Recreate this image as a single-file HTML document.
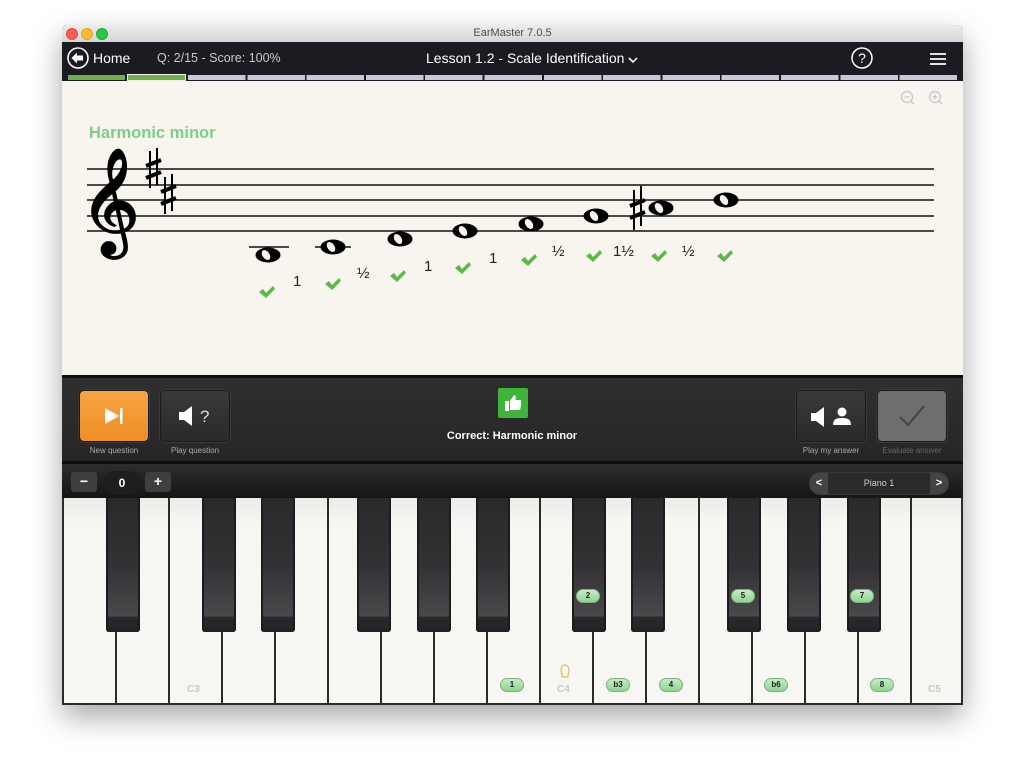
<!DOCTYPE html>
<html><head><meta charset="utf-8"><style>
*{margin:0;padding:0;box-sizing:border-box}
body{width:1024px;height:768px;background:#fff;position:relative;overflow:hidden;font-family:"Liberation Sans","DejaVu Sans",sans-serif}
.a{position:absolute}
#win{left:62px;top:25px;width:901px;height:680px;background:#1c1c1c;box-shadow:0 12px 30px rgba(0,0,0,.35);border-radius:5px 5px 0 0;overflow:hidden}
.tl{width:12px;height:12px;border-radius:50%;top:3px}
.btn{border-radius:5px;border:1px solid #1a1a1a;box-shadow:0 0 0 1px #3a3a3a}
.lbl{font-size:8px;color:#aaa;text-align:center;width:100px}
.wk{top:0;height:205px;width:53px;background:linear-gradient(#ecebe8,#f7f6f3 12%,#f7f6f3);border-left:2px solid #2a2a2a}
.bk{top:0;width:34px;height:134px;background:linear-gradient(#2b292b,#333134 50%,#4a484b 88%,#2a282a 89%,#232123);border-radius:0 0 3px 3px;box-shadow:inset 2px 0 0 #1d1b1d,inset -2px 0 0 #1d1b1d}
.pill{height:14px;border-radius:7px;background:linear-gradient(#c7ecc8,#8fd393);border:1px solid #7bb37f;font-size:8px;font-weight:bold;text-align:center;line-height:12px;color:#222}
.kl{font-size:10px;font-weight:bold;color:#c8c8c8}
</style></head><body>
<div id="win" class="a">
 <div class="a" style="left:0;top:0;width:901px;height:17px;background:linear-gradient(#ececec,#d6d6d6)"></div>
 <div class="a tl" style="left:4px;background:#fc5f57;border:1px solid #de4a42"></div>
 <div class="a tl" style="left:19px;background:#fdbc2e;border:1px solid #dea123"></div>
 <div class="a tl" style="left:34px;background:#28c840;border:1px solid #1eaa30"></div>
 <div class="a" style="left:0;top:2px;width:901px;text-align:center;font-size:11px;color:#4d4d4d">EarMaster 7.0.5</div>
 <div class="a" style="left:0;top:17px;width:901px;height:39px;background:#1b1b22"></div>
 <svg class="a" style="left:5px;top:22px" width="24" height="24"><circle cx="11" cy="11" r="10" fill="none" stroke="#fff" stroke-width="1.6"/><path d="M4.5 11 L10 5.5 V8.5 H16 V13.5 H10 V16.5Z" fill="#fff"/></svg>
 <div class="a" style="left:31px;top:25px;color:#fff;font-size:14px">Home</div>
 <div class="a" style="left:95px;top:26px;color:#c9c9cf;font-size:12.5px">Q: 2/15 - Score: 100%</div>
 <div class="a" style="left:364px;top:25px;color:#fff;font-size:14px">Lesson 1.2 - Scale Identification</div>
 <svg class="a" style="left:565px;top:30px" width="12" height="10"><path d="M2 3 L6 7 L10 3" fill="none" stroke="#fff" stroke-width="1.6"/></svg>
 <svg class="a" style="left:788px;top:22px" width="24" height="24"><circle cx="12" cy="11" r="10" fill="none" stroke="#fff" stroke-width="1.5"/><text x="12" y="16" font-size="14" fill="#fff" text-anchor="middle" font-family="Liberation Sans">?</text></svg>
 <svg class="a" style="left:867px;top:27px" width="18" height="14"><path d="M1 2H17M1 7H17M1 12H17" stroke="#fff" stroke-width="1.8"/></svg>
 <div class="a" style="left:0;top:49px;width:901px;height:7px;background:#1b1b22">
  <div style="position:absolute;left:6px;top:1px;width:57px;height:5px;background:#6cb248"></div>
  <div style="position:absolute;left:65px;top:0;width:59px;height:7px;background:#6cb248;border:1px solid #eee"></div>
 </div>
 <div class="a" style="left:126px;top:50px;width:770px;height:5px;background:repeating-linear-gradient(90deg,#c8c8d6 0,#c8c8d6 57.5px,#1b1b22 57.5px,#1b1b22 59.3px)"></div>
 <div class="a" style="left:0;top:56px;width:901px;height:294px;background:#f7f5ee"></div>
 <div class="a" style="left:27px;top:99px;color:#7dcf86;font-weight:bold;font-size:16.5px">Harmonic minor</div>
 <svg class="a" style="left:838px;top:64px" width="50" height="20"><g fill="none" stroke="#ccc" stroke-width="1.5"><circle cx="7" cy="8" r="5.5"/><path d="M11 12l3 3M4.5 8h5"/><circle cx="35" cy="8" r="5.5"/><path d="M39 12l3 3M32.5 8h5M35 5.5v5"/></g></svg>
 <svg class="a" style="left:0;top:56px" width="901" height="294">
  <defs><path id="ck" d="M-7 0L-3 -3L0 1L7 -6L9 -3L0 6Z"/></defs>
  <g transform="translate(0,-25)">
  <g stroke="#111" stroke-width="1.4"><path d="M25 113H872M25 129H872M25 144H872M25 160H872M25 175H872"/>
  <path d="M187 191H227M253 191H289"/></g>
  <text x="0" y="0" font-size="92" font-family="DejaVu Sans" fill="#000" stroke="#000" stroke-width="1.8" transform="translate(18,176) scale(1.1,1)">𝄞</text>
  <g stroke="#000"><path d="M88 95V132M95 92V129" stroke-width="2"/><path d="M84 110L99 104M84 122L99 116" stroke-width="4"/>
  <path d="M103 121V158M110 118V155" stroke-width="2"/><path d="M99 136L114 130M99 148L114 142" stroke-width="4"/>
  <path d="M572 134V174M579 130V170" stroke-width="2"/><path d="M568 150L583 144M568 162L583 156" stroke-width="4"/></g>
  <g fill="#000"><ellipse cx="206" cy="199" rx="12.5" ry="7.5"/><ellipse cx="271" cy="191" rx="12.5" ry="7.5"/><ellipse cx="338" cy="183" rx="12.5" ry="7.5"/><ellipse cx="403" cy="175" rx="12.5" ry="7.5"/><ellipse cx="469" cy="168" rx="12.5" ry="7.5"/><ellipse cx="534" cy="160" rx="12.5" ry="7.5"/><ellipse cx="599" cy="152" rx="12.5" ry="7.5"/><ellipse cx="664" cy="144" rx="12.5" ry="7.5"/></g>
  <g fill="#f7f5ee"><ellipse cx="204" cy="199" rx="3.5" ry="5.5" transform="rotate(-35 204 199)"/><ellipse cx="269" cy="191" rx="3.5" ry="5.5" transform="rotate(-35 269 191)"/><ellipse cx="336" cy="183" rx="3.5" ry="5.5" transform="rotate(-35 336 183)"/><ellipse cx="401" cy="175" rx="3.5" ry="5.5" transform="rotate(-35 401 175)"/><ellipse cx="467" cy="168" rx="3.5" ry="5.5" transform="rotate(-35 467 168)"/><ellipse cx="532" cy="160" rx="3.5" ry="5.5" transform="rotate(-35 532 160)"/><ellipse cx="597" cy="152" rx="3.5" ry="5.5" transform="rotate(-35 597 152)"/><ellipse cx="662" cy="144" rx="3.5" ry="5.5" transform="rotate(-35 662 144)"/></g>
  <g fill="#222" font-family="Liberation Sans" font-size="15"><text x="231" y="230">1</text><text x="295" y="222">½</text><text x="362" y="215">1</text><text x="427" y="207">1</text><text x="490" y="200">½</text><text x="551" y="200">1½</text><text x="620" y="200">½</text></g>
  <g fill="#5cb848">
  <use href="#ck" x="204" y="236"/><use href="#ck" x="270" y="228"/><use href="#ck" x="335" y="220"/><use href="#ck" x="400" y="212"/><use href="#ck" x="466" y="204"/><use href="#ck" x="531" y="200"/><use href="#ck" x="596" y="200"/><use href="#ck" x="662" y="200"/></g>
  </g>
 </svg>
 <div class="a" style="left:0;top:350px;width:901px;height:3px;background:#0d0d0d"></div>
 <div class="a" style="left:0;top:353px;width:901px;height:83px;background:linear-gradient(#2f2f2f,#262626)"></div>
 <div class="a btn" style="left:17px;top:365px;width:70px;height:52px;background:linear-gradient(#f7a443,#f08f25)"></div>
 <svg class="a" style="left:41px;top:382px" width="24" height="18"><path d="M2 1L16 9L2 17Z" fill="#fff"/><rect x="17" y="1" width="2.5" height="16" fill="#fff"/></svg>
 <div class="a lbl" style="left:2px;top:421px">New question</div>
 <div class="a btn" style="left:98px;top:365px;width:70px;height:52px;background:linear-gradient(#3a3a3a,#2a2a2a)"></div>
 <svg class="a" style="left:116px;top:380px" width="40" height="22"><path d="M1 7H6L14 1V21L6 15H1Z" fill="#fff"/><text x="22" y="17" font-size="17" fill="#ddd" font-family="Liberation Sans">?</text></svg>
 <div class="a lbl" style="left:83px;top:421px">Play question</div>
 <div class="a" style="left:436px;top:363px;width:30px;height:30px;background:#3db53a;border-radius:2px"></div>
 <svg class="a" style="left:440px;top:367px" width="22" height="22"><path d="M3 9H7V19H3Z M8 9L12 3C14 3 14 5 13.5 8H18C19.5 8 19.5 10 18.5 10.5C19.5 11 19.5 12.5 18.5 13C19.3 13.5 19.3 15 18.2 15.5C18.8 16.5 18.3 18 17 18H8Z" fill="#fff"/></svg>
 <div class="a" style="left:300px;top:405px;width:300px;text-align:center;color:#fff;font-size:11px;font-weight:bold">Correct: Harmonic minor</div>
 <div class="a btn" style="left:734px;top:365px;width:70px;height:52px;background:linear-gradient(#3a3a3a,#2a2a2a)"></div>
 <svg class="a" style="left:748px;top:381px" width="44" height="22"><path d="M1 7H6L14 1V21L6 15H1Z" fill="#fff"/><circle cx="32" cy="6" r="4.5" fill="#fff"/><path d="M23 19C23 13 27 12 32 12S41 13 41 19Z" fill="#fff"/></svg>
 <div class="a lbl" style="left:719px;top:421px">Play my answer</div>
 <div class="a btn" style="left:815px;top:365px;width:70px;height:52px;background:#6e6e6e"></div>
 <svg class="a" style="left:835px;top:378px" width="30" height="26"><path d="M3 14L11 22L27 3" fill="none" stroke="#444" stroke-width="2"/></svg>
 <div class="a lbl" style="left:800px;top:421px;color:#666">Evaluate answer</div>
 <div class="a" style="left:0;top:436px;width:901px;height:3px;background:#0d0d0d"></div>
 <div class="a" style="left:0;top:439px;width:901px;height:34px;background:linear-gradient(#2d2d2d,#151515)"></div>
 <div class="a" style="left:9px;top:447px;width:26px;height:20px;background:#3f3f3f;border-radius:3px;color:#fff;text-align:center;font-weight:bold;font-size:14px;line-height:19px">−</div>
 <div class="a" style="left:41px;top:446px;width:38px;height:24px;background:#1e1e1e;border-radius:12px;color:#fff;text-align:center;font-weight:bold;font-size:12px;line-height:24px">0</div>
 <div class="a" style="left:83px;top:447px;width:26px;height:20px;background:#3f3f3f;border-radius:3px;color:#fff;text-align:center;font-weight:bold;font-size:14px;line-height:19px">+</div>
 <div class="a" style="left:748px;top:448px;width:138px;height:21px;background:#2a2a2a;border-radius:10px;box-shadow:0 0 0 1px #3a3a3a"></div>
 <div class="a" style="left:748px;top:448px;width:18px;height:21px;background:#444;border-radius:10px 0 0 10px;color:#fff;font-size:11px;font-weight:bold;text-align:center;line-height:21px">&lt;</div>
 <div class="a" style="left:868px;top:448px;width:18px;height:21px;background:#444;border-radius:0 10px 10px 0;color:#fff;font-size:11px;font-weight:bold;text-align:center;line-height:21px">&gt;</div>
 <div class="a" style="left:766px;top:453px;width:102px;text-align:center;color:#ccc;font-size:9px">Piano 1</div>
 <div class="a" style="left:0;top:473px;width:901px;height:207px;background:#2a2a2a">
  <div class="a wk" style="left:0"></div><div class="a wk" style="left:53px"></div><div class="a wk" style="left:106px"></div><div class="a wk" style="left:159px"></div><div class="a wk" style="left:212px"></div><div class="a wk" style="left:265px"></div><div class="a wk" style="left:318px"></div><div class="a wk" style="left:371px"></div><div class="a wk" style="left:424px"></div><div class="a wk" style="left:477px"></div><div class="a wk" style="left:530px"></div><div class="a wk" style="left:583px"></div><div class="a wk" style="left:636px"></div><div class="a wk" style="left:689px"></div><div class="a wk" style="left:742px"></div><div class="a wk" style="left:795px"></div><div class="a wk" style="left:848px;width:51px"></div>
  <div class="a bk" style="left:44px"></div><div class="a bk" style="left:140px"></div><div class="a bk" style="left:199px"></div><div class="a bk" style="left:295px"></div><div class="a bk" style="left:355px"></div><div class="a bk" style="left:414px"></div><div class="a bk" style="left:510px"></div><div class="a bk" style="left:569px"></div><div class="a bk" style="left:665px"></div><div class="a bk" style="left:725px"></div><div class="a bk" style="left:785px"></div>
  <div class="a kl" style="left:125px;top:186px">C3</div>
  <div class="a kl" style="left:495px;top:186px">C4</div>
  <div class="a kl" style="left:866px;top:186px">C5</div>
  <svg class="a" style="left:497px;top:165px" width="12" height="16"><path d="M3 14V11C1 8 2 2 6 2S11 8 9 11V14Z" fill="none" stroke="#e0b860" stroke-width="1.2"/></svg>
  <div class="a pill" style="left:438px;top:180px;width:24px">1</div>
  <div class="a pill" style="left:544px;top:180px;width:24px">b3</div>
  <div class="a pill" style="left:597px;top:180px;width:24px">4</div>
  <div class="a pill" style="left:702px;top:180px;width:24px">b6</div>
  <div class="a pill" style="left:808px;top:180px;width:24px">8</div>
  <div class="a pill" style="left:514px;top:91px;width:24px">2</div>
  <div class="a pill" style="left:669px;top:91px;width:24px">5</div>
  <div class="a pill" style="left:788px;top:91px;width:24px">7</div>
 </div>
</div>
</body></html>
